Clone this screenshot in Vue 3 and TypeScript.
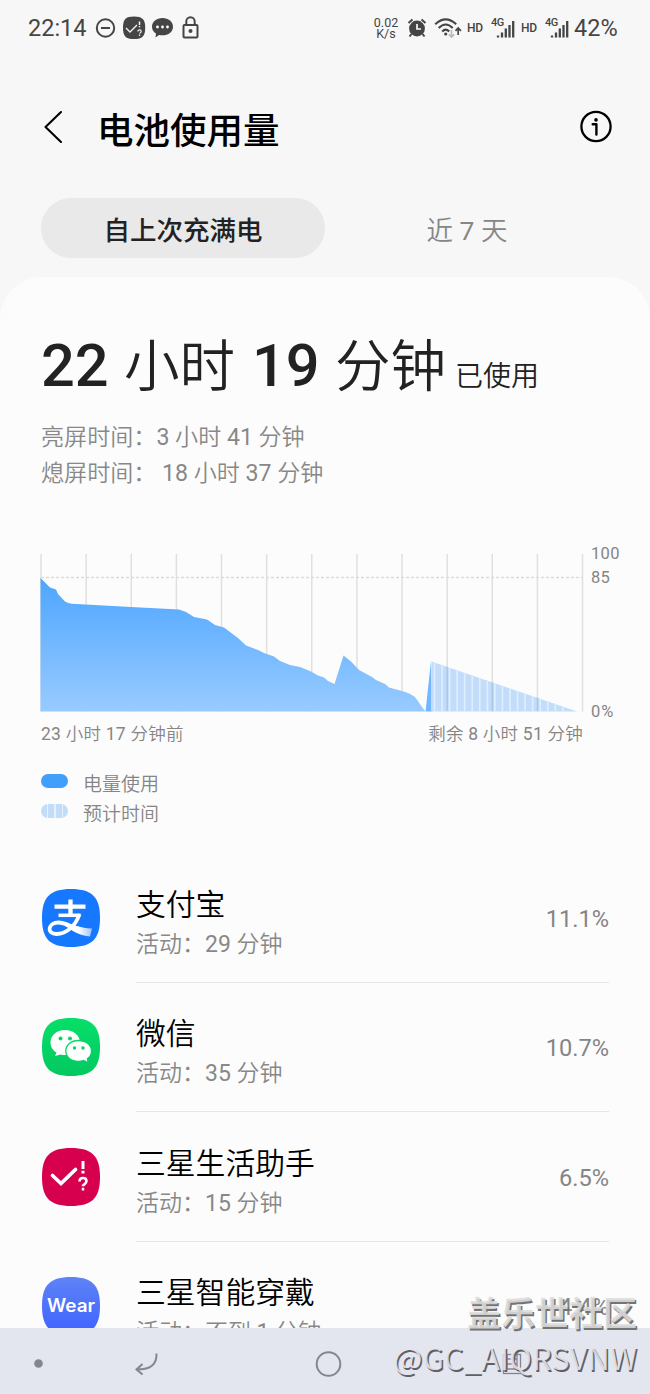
<script setup lang="ts">
import { h, type FunctionalComponent } from 'vue'

interface AppUsage {
  id: string
  name: string
  active: string
  percent: string
}

// Numbers are set in a regular weight next to the lighter Chinese text.
const Mixed: FunctionalComponent<{ text: string }> = (props) =>
  h('span', { class: 'mixed' }, props.text.split(/(\d+)/).map((part) =>
    /^\d+$/.test(part) ? h('span', { class: 'num' }, part) : part))
Mixed.props = ['text']

const apps: AppUsage[] = [
  { id: 'alipay', name: '支付宝', active: '29 分钟', percent: '11.1%' },
  { id: 'wechat', name: '微信', active: '35 分钟', percent: '10.7%' },
  { id: 'bixby', name: '三星生活助手', active: '15 分钟', percent: '6.5%' },
  { id: 'wear', name: '三星智能穿戴', active: '不到 1 分钟', percent: '4.4%' },
]

const squircle = 'M29 0C50 0 58 8 58 29S50 58 29 58S0 50 0 29S8 0 29 0Z'
const gridLines: number[] = Array.from({ length: 13 }, (_, i) => 1 + i * 45.13)
const stripes: number[] = Array.from({ length: 18 }, (_, i) => 394.5 + i * 7.55)
</script>

<template>
  <div class="screen">
    <div class="status">
      <span class="clock">22:14</span>
      <svg class="left-icons" width="106" height="26" viewBox="0 0 106 26">
        <g fill="none" stroke="#454545" stroke-width="2">
          <circle cx="12.500" cy="13" r="8.700" />
          <path d="M8 13H17" />
        </g>
        <path d="M41 1.500C49.500 1.500 52.200 4.500 52.200 12.700S49.500 24 41 24S30 21 30 12.700S32.500 1.500 41 1.500Z" fill="#454545" />
        <path d="M33 13l4 4 7-7" fill="none" stroke="#f7f7f7" stroke-width="1.300" />
        <g fill="none" stroke="#f7f7f7" stroke-width="1.500">
          <path d="M46.500 6.500V10M46.500 11V12.300" />
          <path d="M44.800 16.500Q45 14.800 46.600 14.800T48.200 16.500Q48.200 17.500 46.500 18.500M46.500 19.500V21" stroke-width="1.200" />
        </g>
        <path d="M69.500 3C75.500 3 80 6.500 80 11.700S75.500 20.300 69.500 20.300Q67.500 20.300 66 20L62.500 22.500L63 18.500Q59 16 59 11.700C59 6.500 63.500 3 69.500 3Z" fill="#454545" />
        <g fill="#fff"><circle cx="64.500" cy="12" r="1.400" /><circle cx="69.500" cy="12" r="1.400" /><circle cx="74.500" cy="12" r="1.400" /></g>
        <g fill="none" stroke="#454545" stroke-width="2">
          <rect x="90.500" y="10" width="14" height="12.500" rx="1" />
          <path d="M93.300 10V6.500a4.200 4.200 0 0 1 8.400 0V10" />
        </g>
        <circle cx="97.500" cy="16" r="2" fill="#454545" />
      </svg>
      <span class="speed"><span>0.02</span><span>K/s</span></span>
      <svg class="alarm" width="20" height="22" viewBox="0 0 20 22">
        <circle cx="10" cy="11.500" r="7.900" fill="#454545" />
        <path d="M1.500 6L5.500 2.500M18.500 6L14.500 2.500M4.500 17L2.500 19.500M15.500 17L17.500 19.500" stroke="#454545" stroke-width="2" />
        <path d="M10 7V12H14" fill="none" stroke="#f7f7f7" stroke-width="1.700" />
      </svg>
      <svg class="wifi" width="28" height="22" viewBox="0 0 28 22">
        <g fill="none" stroke="#454545" stroke-width="2.100">
          <path d="M1.200 7.200Q11.700-2.500 22.200 7.200M4.700 11Q11.700 4 18.700 11M8.200 14.500Q11.700 10.800 15.200 14.500" />
          <path d="M24.200 18V11M21.500 13.800L24.200 11L27 13.800" stroke-width="1.700" />
        </g>
        <circle cx="11.700" cy="17" r="1.600" fill="#454545" />
        <path d="M17.500 13V20M14.800 17.300L17.500 20L20.200 17.300" fill="none" stroke="#bababa" stroke-width="1.700" />
      </svg>
      <template v-for="sim in 2" :key="sim">
        <span class="hd">HD</span>
        <svg class="signal" width="26" height="22" viewBox="0 0 26 22">
          <text x="0" y="8.500" class="net">4G</text>
          <path d="M7 20.500V18.500M11 20.500V15.500M14.800 20.500V11.500M18.500 20.500V8M22.200 20.500V4" stroke="#454545" stroke-width="2.300" />
        </svg>
      </template>
      <span class="battery">42%</span>
    </div>

    <header class="header">
      <svg width="20" height="34" viewBox="0 0 20 34"><path d="M17 2L1.500 17L17 32" fill="none" stroke="#000" stroke-width="2.100" stroke-linecap="round" stroke-linejoin="round" /></svg>
      <h1>电池使用量</h1>
      <svg width="34" height="34" viewBox="0 0 34 34">
        <circle cx="17" cy="16.500" r="14.600" fill="none" stroke="#000" stroke-width="2.300" />
        <circle cx="17" cy="9.900" r="1.800" />
        <path d="M13.700 14.200H17.400V24.500" fill="none" stroke="#000" stroke-width="2.400" stroke-linecap="round" stroke-linejoin="round" />
      </svg>
    </header>

    <nav class="tabs">
      <button class="tab active">自上次充满电</button>
      <button class="tab"><Mixed text="近 7 天" /></button>
    </nav>

    <main class="card">
      <div class="total"><b>22</b><span class="unit">小时</span><b class="second">19</b><span class="unit">分钟</span><small>已使用</small></div>
      <div class="times">
        <p><Mixed text="亮屏时间：3 小时 41 分钟" /></p>
        <p><Mixed text="熄屏时间： 18 小时 37 分钟" /></p>
      </div>

      <div class="chart">
        <svg width="544" height="160" viewBox="0 0 544 160">
          <defs>
            <linearGradient id="usage" gradientUnits="userSpaceOnUse" x1="0" y1="24" x2="0" y2="158">
              <stop offset="0" stop-color="#4da5ff" />
              <stop offset="1" stop-color="#98cbff" />
            </linearGradient>
            <clipPath id="estimate"><path d="M391.500 108.500L537 158H391Z" /></clipPath>
          </defs>
          <path v-for="x in gridLines" :key="x" :d="`M${x} 1V158.500`" stroke="#e0e0e0" stroke-width="1.500" />
          <path d="M1 24.500H542" stroke="#dcdcdc" stroke-width="1.300" stroke-dasharray="3 2" />
          <path d="M.5 25L10 34.500L16 36.500L18 41L25 48.500Q28 50.500 32 50.700L91 54L139 56.500L146 59L154 64L167 66.500L175 72L184 74.500L198 85L206 92.500L218 97L224 100L234 103.500L240 108L250 112L260 114L271 118.500L278 122.500L284 124.500L288 128L294.500 131L303.500 102.500L311 108.500L319 117L332 124L336 127L345 131L349 134.500L362 138Q370 140 375 144Q378 148 382 154L385.500 158.500H.500Z" fill="url(#usage)" />
          <path d="M385.500 158.500L391 108L392 158.500Z" fill="#72b7ff" />
          <path d="M391.500 108.500L537 158.500H391Z" fill="#c2dcfa" />
          <g clip-path="url(#estimate)">
            <path v-for="x in stripes" :key="x" :d="`M${x} 100V158`" stroke="#dceeff" stroke-width="1.700" />
            <path d="M407.200 100V158M452.300 100V158M497.500 100V158" stroke="#a9c8e8" stroke-width="1.500" />
          </g>
        </svg>
        <div class="scale"><span>100</span><span>85</span><span class="zero">0%</span></div>
      </div>
      <div class="range"><Mixed text="23 小时 17 分钟前" /><Mixed text="剩余 8 小时 51 分钟" /></div>
      <ul class="legend">
        <li><i class="solid"></i><span>电量使用</span></li>
        <li><i class="striped"></i><span>预计时间</span></li>
      </ul>

      <ul class="apps">
        <li v-for="app in apps" :key="app.id">
          <svg width="58" height="58" viewBox="0 0 58 58">
            <template v-if="app.id === 'alipay'">
              <defs><linearGradient id="tail" x1="0" x2="1"><stop offset=".5" stop-color="#fff" /><stop offset="1" stop-color="#9ac5ff" /></linearGradient></defs>
              <path :d="squircle" fill="#1677ff" />
              <path d="M12.500 17.700H43.500M28.500 10.500V26" fill="none" stroke="#fff" stroke-width="4.300" />
              <path d="M16.500 26.300H38.500" stroke="#fff" stroke-width="3.500" />
              <path d="M37.500 25C34 36 25 45 14.500 45C4 45 6 33.500 16.500 33.500C24 33.500 32 40 48 42.500" fill="none" stroke="#fff" stroke-width="3.800" />
              <path d="M23 33.500C32 36 38 39 50 39.500L48 47.500C38 47 31 42 23 37Z" fill="url(#tail)" />
            </template>
            <template v-else-if="app.id === 'wechat'">
              <defs><linearGradient id="leaf" x1="0" y1="0" x2="0" y2="1"><stop stop-color="#06df69" /><stop offset="1" stop-color="#03c860" /></linearGradient></defs>
              <path :d="squircle" fill="url(#leaf)" />
              <path d="M23 12C31.500 12 38 17.500 38 24.500S31.500 37 23 37Q20.500 37 18.500 36.500L13 38L14.500 34.500Q8.500 31 8.500 24.500C8.500 17.500 14.500 12 23 12Z" fill="#fff" />
              <path d="M36.500 22.500C44 22.500 49.500 27 49.500 33Q49.500 38 45.500 40.500L46 44.500L41.500 42.500Q39 43.300 36.500 43.300C29 43.300 23.800 39 23.800 33S29 22.500 36.500 22.500Z" fill="#fff" stroke="#07d567" stroke-width="1.300" />
              <g fill="#06d565"><circle cx="18.500" cy="20.500" r="2" /><circle cx="28" cy="20.500" r="2" /><circle cx="32.500" cy="30" r="1.700" /><circle cx="41" cy="30" r="1.700" /></g>
            </template>
            <template v-else-if="app.id === 'bixby'">
              <path :d="squircle" fill="#d6004f" />
              <path d="M10.500 27.500L19 35.500L33.500 21.500" fill="none" stroke="#fff" stroke-width="3.700" stroke-linecap="round" />
              <g fill="none" stroke="#fff" stroke-width="3">
                <path d="M41 13V21M41 22.800V25.600" />
                <path d="M37.500 33.500Q37.500 30 41 30T44.500 33Q44.500 35 41 37.500V38.300M41 39.700V42.500" stroke-width="2.500" />
              </g>
            </template>
            <template v-else>
              <defs><linearGradient id="band" x1="0" y1="0" x2="0" y2="1"><stop stop-color="#5e83f6" /><stop offset="1" stop-color="#3f62ff" /></linearGradient></defs>
              <path :d="squircle" fill="url(#band)" />
              <text x="29" y="35" class="wear" textLength="48" lengthAdjust="spacingAndGlyphs">Wear</text>
            </template>
          </svg>
          <div class="entry">
            <div class="names"><strong>{{ app.name }}</strong><Mixed class="active-time" :text="'活动：' + app.active" /></div>
            <span class="percent">{{ app.percent }}</span>
          </div>
        </li>
      </ul>
    </main>

    <footer class="navbar">
      <svg width="650" height="66" viewBox="0 0 650 66" fill="none" stroke="#85858f" stroke-width="2">
        <circle cx="38.500" cy="35.500" r="4.300" fill="#85858f" stroke="none" />
        <path d="M156.500 25.500C157 36 151 41.500 137 41.500M142.500 36L136.500 41.500L142.500 46.500" />
        <circle cx="328.500" cy="36" r="11.800" />
        <g stroke-width="1.300"><rect x="503.500" y="26.500" width="17" height="19" /><path d="M507 26V41H517V26M507 31H517M507 36H517" /></g>
      </svg>
    </footer>
    <div class="watermark"><span class="community">盖乐世社区</span><span class="author">@GC_AIQRSVNW</span></div>
  </div>
</template>

<style>
body { background: #f7f7f7; }
.num { font-weight: 400; }
</style>

<style scoped>
* { box-sizing: border-box; }
.screen { position: relative; width: 650px; height: 1394px; overflow: hidden; display: flex; flex-direction: column; background: #f7f7f7; color: #222; font-family: Roboto, "Noto Sans CJK SC", sans-serif; }
h1, p, ul { margin: 0; padding: 0; }
li { list-style: none; }
svg { display: block; flex: none; }
.status { height: 56px; flex: none; display: flex; align-items: center; padding-left: 28px; color: #454545; }
.clock { width: 65px; font-size: 23.500px; }
.left-icons { margin-right: 174px; }
.speed { width: 26px; display: flex; flex-direction: column; align-items: center; font-size: 12.500px; line-height: 11.500px; white-space: nowrap; }
.alarm { margin-left: 8px; }
.wifi { margin-left: 7px; }
.hd { width: 17px; margin-left: 5px; font-size: 12px; letter-spacing: -.3px; font-weight: 500; }
.signal { margin-left: 7px; }
.net { font: 500 11px Roboto, sans-serif; fill: #454545; letter-spacing: -.4px; }
.signal + .hd { margin-left: 4px; }
.battery { margin-left: 3px; font-size: 23.500px; white-space: nowrap; }
.header { height: 142px; flex: none; display: flex; align-items: center; padding: 0 37px 0 44px; }
.header h1 { flex: 1; margin-left: 33px; padding-top: 9px; font-size: 36.500px; line-height: 50px; font-weight: 500; color: #000; }
.tabs { height: 60px; flex: none; display: flex; padding: 0 41px; }
.tab { width: 284px; height: 60px; padding: 5px 0 0; border: 0; border-radius: 30px; background: none; color: #868686; font-family: inherit; font-size: 26.500px; line-height: 40px; font-weight: 350; text-align: center; }
.tab.active { background: #e9e9e9; color: #222; font-weight: 500; }
.card { height: 1051px; flex: none; margin-top: 19px; overflow: hidden; border-radius: 42px 42px 0 0; background: #fcfcfc; padding: 47px 41px 0; }
.total { height: 84px; display: flex; align-items: baseline; line-height: 84px; white-space: nowrap; }
.total b { width: 83px; font-size: 59.500px; font-weight: 500; }
.total .unit { width: 112px; font-size: 55.500px; font-weight: 350; }
.total .second { margin-left: 16px; }
.total small { margin-left: 8px; font-size: 28px; font-weight: 350; }
.times { margin-top: 12px; color: #888; font-size: 23.100px; line-height: 35.500px; font-weight: 350; white-space: nowrap; }
.chart { display: flex; margin: 62px -41px 0 -1px; height: 160px; }
.scale { height: 160px; margin-left: 7px; color: #858585; font-size: 16.500px; letter-spacing: .3px; display: flex; flex-direction: column; line-height: 24px; margin-top: -11px; }
.scale .zero { margin-top: 110px; letter-spacing: 1px; }
.range { width: 542px; margin-top: 8px; display: flex; justify-content: space-between; color: #858585; font-size: 17.500px; letter-spacing: .25px; line-height: 26px; font-weight: 350; }
.legend { margin-top: 20px; color: #858585; font-size: 19px; font-weight: 350; }
.legend li { display: flex; align-items: center; height: 30.200px; }
.legend i { width: 27px; height: 14px; margin-right: 15px; margin-top: -3px; border-radius: 7px; background: #429efb; }
.legend .striped { background: repeating-linear-gradient(90deg, #c3dcf7 0 6px, #e5f1ff 6px 7.500px); }
.apps { margin-top: 26px; }
.apps li { height: 129.400px; display: flex; align-items: center; padding-left: 1px; }
.entry { width: 473px; height: 129.400px; margin-left: 36px; display: flex; flex: none; align-items: center; justify-content: space-between; border-bottom: 1.500px solid #e6e6e6; }
.names { padding-top: 13px; display: flex; flex-direction: column; white-space: nowrap; }
.names strong { font-size: 29.800px; line-height: 42px; font-weight: 350; color: #000; }
.active-time { font-size: 23px; line-height: 38px; font-weight: 350; color: #888; }
.percent { padding-top: 3px; font-size: 23.600px; color: #858585; }
.wear { font: 600 18px Inter, sans-serif; fill: #fff; text-anchor: middle; }
.navbar { flex: none; height: 66px; background: #e3e5ef; }
.watermark { position: absolute; right: 13px; bottom: 14px; display: flex; flex-direction: column; align-items: flex-end; font-family: "Noto Sans CJK SC", sans-serif; white-space: nowrap; color: rgba(220, 220, 220, .88); text-shadow: 1.500px 1.500px 0 #747474; }
.community { font-size: 34px; line-height: 45px; font-weight: 700; }
.author { font-size: 31px; line-height: 46px; color: rgba(230, 230, 235, .9); text-shadow: 1.500px 1.500px 0 #606068; }
</style>
